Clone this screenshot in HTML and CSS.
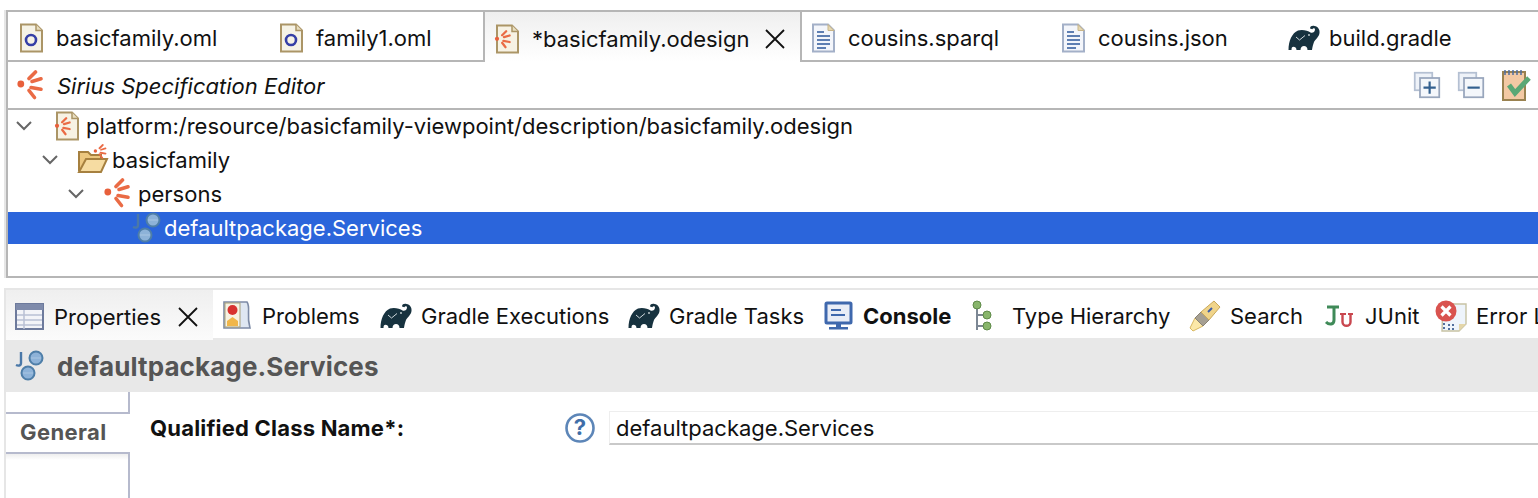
FILE: index.html
```html
<!DOCTYPE html>
<html lang="en">
<head>
<meta charset="utf-8">
<title>Sirius Specification Editor</title>
<link rel="stylesheet" href="styles.css">
</head>
<body>
<svg class="defs" width="0" height="0" aria-hidden="true">
  <defs>
    <symbol id="sirius" viewBox="0 0 32 32">
      <circle cx="4.800" cy="14" r="3.400" fill="#e8603c"/>
      <g stroke="#ea6b45" stroke-width="3.600" stroke-linecap="round" fill="none">
        <path d="M13 8.500 L19.500 2"/>
        <path d="M16 11.500 L25 8.800"/>
        <path d="M15 17.500 L25 19.200"/>
        <path d="M13 20.500 L18.500 27.500"/>
      </g>
    </symbol>
    <symbol id="omlfile" viewBox="0 0 32 32">
      <path d="M6 2.500 H21 L27 8.500 V29.500 H6 Z" fill="#f6f3e6" stroke="#ab9566" stroke-width="2"/>
      <path d="M21 2.500 V8.500 H27" fill="#e9dfc0" stroke="#ab9566" stroke-width="1.500"/>
      <circle cx="16" cy="18" r="5" fill="none" stroke="#3640a6" stroke-width="2.600"/>
    </symbol>
    <symbol id="odesign" viewBox="0 0 32 32">
      <path d="M6 2.500 H21 L27 8.500 V29.500 H6 Z" fill="#f7f2e4" stroke="#ab9566" stroke-width="2"/>
      <path d="M21 2.500 V8.500 H27" fill="#e9dfc0" stroke="#ab9566" stroke-width="1.500"/>
      <use href="#sirius" x="3" y="7" width="20" height="20"/>
    </symbol>
    <symbol id="textfile" viewBox="0 0 32 32">
      <path d="M6 2.500 H21 L27 8.500 V29.500 H6 Z" fill="#f4f6fb" stroke="#a3b0c8" stroke-width="2"/>
      <path d="M21 2.500 V8.500 H27 Z" fill="#e6d8b0" stroke="#c7b488" stroke-width="1"/>
      <path d="M10 10 H17 M10 14 H23 M10 18 H23 M10 22 H23 M10 26 H19" stroke="#5f7fb2" stroke-width="2"/>
    </symbol>
    <symbol id="gradle" viewBox="0 0 32 32">
      <path fill="#17323f" d="M0.500 28 C0.500 19 4 11 10 8.500 C14 7 20 8.500 22.500 10.500 C24.500 11.500 27 10 27 7.500 C27 6 25 5.600 24.400 7.200 L22 6.500 C22 4 24.500 3.500 26.500 4 C30 4.500 32 7.500 31.500 11 C31 15 27.500 17 26 20 C25 22.500 24.500 25 24 28 H19.500 C19.500 25.500 18 24 16 24 C14 24 12.500 25.500 12.500 28 H8.500 C8.500 26 7 24.800 5.500 24.800 C4 24.800 3.500 26 3.500 28 Z"/>
      <path d="M8 15 L11.500 18 L17 13.500" fill="none" stroke="#cfd8dc" stroke-width="1"/>
      <circle cx="21" cy="13" r="0.900" fill="#cfd8dc"/>
    </symbol>
    <symbol id="classes" viewBox="0 0 32 32">
      <path d="M6 2 V13 C6 16 3 16 1 15" fill="none" stroke="#4a78a8" stroke-width="2.400"/>
      <circle cx="21" cy="8" r="6.500" fill="#8db2d8" stroke="#4e7ea8" stroke-width="2"/>
      <path d="M16 8 H26" stroke="#a9c6e2" stroke-width="1"/>
      <circle cx="13" cy="23" r="6.500" fill="#8db2d8" stroke="#4e7ea8" stroke-width="2"/>
      <path d="M8 23 H18" stroke="#a9c6e2" stroke-width="1"/>
    </symbol>
  </defs>
</svg>

<main class="workbench">
  <section class="editor">
    <div class="tabs top-tabs">
      <div class="tab"><svg class="ico"><use href="#omlfile"/></svg><span>basicfamily.oml</span></div>
      <div class="tab"><svg class="ico"><use href="#omlfile"/></svg><span>family1.oml</span></div>
      <div class="tab active">
        <svg class="ico"><use href="#odesign"/></svg><span>*basicfamily.odesign</span>
        <svg class="close" viewBox="0 0 20 20"><path d="M1 1 L19 19 M19 1 L1 19"/></svg>
      </div>
      <div class="tab"><svg class="ico"><use href="#textfile"/></svg><span>cousins.sparql</span></div>
      <div class="tab"><svg class="ico"><use href="#textfile"/></svg><span>cousins.json</span></div>
      <div class="tab"><svg class="ico"><use href="#gradle"/></svg><span>build.gradle</span></div>
    </div>
    <header class="form-title">
      <div class="form-name"><svg class="ico"><use href="#sirius"/></svg><em>Sirius Specification Editor</em></div>
      <div class="tools">
        <svg class="tool" viewBox="0 0 32 32">
          <rect x="2" y="2" width="20" height="20" fill="#eef2f8" stroke="#b4c0d2" stroke-width="2"/>
          <rect x="8" y="8" width="22" height="22" fill="#f4f7fb" stroke="#98a6bc" stroke-width="2"/>
          <path d="M12 19 H26 M19 12 V26" stroke="#33608f" stroke-width="2.500"/>
        </svg>
        <svg class="tool" viewBox="0 0 32 32">
          <rect x="2" y="2" width="20" height="20" fill="#eef2f8" stroke="#b4c0d2" stroke-width="2"/>
          <rect x="8" y="8" width="22" height="22" fill="#f4f7fb" stroke="#98a6bc" stroke-width="2"/>
          <path d="M12 19 H26" stroke="#33608f" stroke-width="2.500"/>
        </svg>
        <svg class="tool notebook" viewBox="0 0 30 32">
          <rect x="2" y="3" width="22" height="28" fill="#f3c9a4" stroke="#9a8250" stroke-width="2"/>
          <path d="M4 1 V6 M8 1 V6 M12 1 V6 M16 1 V6 M20 1 V6" stroke="#4f6da0" stroke-width="1.500"/>
          <path d="M8 16 L14 24 L28 9" fill="none" stroke="#5aa875" stroke-width="5"/>
        </svg>
      </div>
    </header>
    <div class="tree">
      <div class="row depth-0">
        <svg class="twist" viewBox="0 0 16 10"><path d="M1 1 L8 8 L15 1"/></svg>
        <svg class="ico"><use href="#odesign"/></svg>
        <span>platform:/resource/basicfamily-viewpoint/description/basicfamily.odesign</span>
      </div>
      <div class="row depth-1">
        <svg class="twist" viewBox="0 0 16 10"><path d="M1 1 L8 8 L15 1"/></svg>
        <svg class="ico" viewBox="0 0 32 32">
          <path d="M2 27 V8 H11 L14 11 H24 V15" fill="#ecc77f" stroke="#a6803f" stroke-width="2"/>
          <path d="M2 28 L9 15 H30 L24 28 Z" fill="#f6dca2" stroke="#a6803f" stroke-width="2"/>
          <use href="#sirius" x="16" y="0" width="16" height="16"/>
        </svg>
        <span>basicfamily</span>
      </div>
      <div class="row depth-2">
        <svg class="twist" viewBox="0 0 16 10"><path d="M1 1 L8 8 L15 1"/></svg>
        <svg class="ico"><use href="#sirius"/></svg>
        <span>persons</span>
      </div>
      <div class="row depth-3 selected">
        <svg class="ico"><use href="#classes"/></svg>
        <span>defaultpackage.Services</span>
      </div>
    </div>
  </section>

  <section class="views">
    <div class="tabs bottom-tabs">
      <div class="tab active">
        <svg class="ico" viewBox="0 0 32 32">
          <rect x="3" y="3" width="27" height="25" fill="#f3f4f8" stroke="#6d7a9c" stroke-width="2"/>
          <rect x="3" y="3" width="27" height="6" fill="#7f8bab"/>
          <path d="M4 14 H29 M4 19 H29 M4 24 H29 M11 9 V28" stroke="#b9c0d4" stroke-width="1.500"/>
        </svg>
        <span>Properties</span>
        <svg class="close" viewBox="0 0 20 20"><path d="M1 1 L19 19 M19 1 L1 19"/></svg>
      </div>
      <div class="tab">
        <svg class="ico" viewBox="0 0 32 32">
          <path d="M3 2 H26 C30 8 25 14 29 28 H3 Z" fill="#dfe7f2" stroke="#7d8ba6" stroke-width="1.600"/>
          <rect x="4" y="3" width="15" height="24" fill="#f7f2e2" stroke="#a8a078" stroke-width="1"/>
          <circle cx="11.500" cy="10" r="5" fill="#d8322f"/>
          <path d="M6 26 V21 L11.500 17 L17 21 V26 Z" fill="#f0b64a"/>
        </svg>
        <span>Problems</span>
      </div>
      <div class="tab"><svg class="ico"><use href="#gradle"/></svg><span>Gradle Executions</span></div>
      <div class="tab"><svg class="ico"><use href="#gradle"/></svg><span>Gradle Tasks</span></div>
      <div class="tab">
        <svg class="ico" viewBox="0 0 32 32">
          <rect x="4" y="3" width="25" height="20" rx="1" fill="#e9edf6" stroke="#3f68ad" stroke-width="3"/>
          <path d="M9 10 H19 M9 15 H23" stroke="#3f68ad" stroke-width="2"/>
          <path d="M14 24 H19 V27 H14 Z M7 27 H26 V29.500 H7 Z" fill="#3f68ad"/>
        </svg>
        <strong>Console</strong>
      </div>
      <div class="tab">
        <svg class="ico" viewBox="0 0 32 32">
          <path d="M6 5 V30 M6 15 H14 M6 26 H14" stroke="#7c8794" stroke-width="2" fill="none"/>
          <circle cx="6" cy="5" r="4" fill="#88b56b" stroke="#5e8a48"/>
          <circle cx="16" cy="15" r="4" fill="#88b56b" stroke="#5e8a48"/>
          <circle cx="16" cy="26" r="4" fill="#88b56b" stroke="#5e8a48"/>
        </svg>
        <span>Type Hierarchy</span>
      </div>
      <div class="tab">
        <svg class="ico" viewBox="0 0 32 32">
          <path d="M1 28 L6 18 L14 26 L4 31 Z" fill="#fbe8a8" stroke="#d9b860" stroke-width="1"/>
          <path d="M6 18 L12 12 L20 20 L14 26 Z" fill="#a59f92" stroke="#8a8374"/>
          <path d="M12 12 L25 1 L31 7 L20 20 Z" fill="#f0d48a" stroke="#c9a85a"/>
          <path d="M19 12 L23 8" stroke="#3d5da8" stroke-width="2"/>
        </svg>
        <span>Search</span>
      </div>
      <div class="tab">
        <svg class="ico" viewBox="0 0 32 32">
          <path d="M3 7 H15 M10 7 V20 C10 25 5 25 2 22" fill="none" stroke="#3f8a58" stroke-width="3"/>
          <path d="M16 14 H22 M24 14 H29" fill="none" stroke="#c9474f" stroke-width="1.800"/>
          <path d="M18.500 14 V22 C18.500 27 26.500 27 26.500 22 V14" fill="none" stroke="#c9474f" stroke-width="2.400"/>
        </svg>
        <span>JUnit</span>
      </div>
      <div class="tab">
        <svg class="ico" viewBox="0 0 32 32">
          <path d="M8 4 H31 V24 L24 31 H7 Z" fill="#eef4fb" stroke="#c7c2a4" stroke-width="1.400"/>
          <path d="M24 31 V24 H31 Z" fill="#e4d6a9"/>
          <path d="M9 23 V29 M13 25 H20 M13 29 H20" stroke="#52709e" stroke-width="2" stroke-dasharray="2 2"/>
          <circle cx="11" cy="11" r="10.500" fill="#d9534f"/>
          <path d="M6.500 6.500 L15.500 15.500 M15.500 6.500 L6.500 15.500" stroke="#fff" stroke-width="3.200"/>
        </svg>
        <span>Error Log</span>
      </div>
    </div>
    <header class="prop-title">
      <svg class="ico"><use href="#classes"/></svg>
      <h1>defaultpackage.Services</h1>
    </header>
    <div class="prop-body">
      <nav class="prop-nav">
        <div class="nav-top"></div>
        <div class="nav-item">General</div>
        <div class="nav-rest"></div>
      </nav>
      <div class="prop-field">
        <label class="field-label" for="qcn">Qualified Class Name*:</label>
        <svg class="help" viewBox="0 0 32 32">
          <circle cx="16" cy="16" r="13.500" fill="#fff" stroke="#5d86b8" stroke-width="2.600"/>
          <text x="16" y="23" text-anchor="middle" class="help-mark">?</text>
        </svg>
        <div class="field-input" id="qcn">defaultpackage.Services</div>
      </div>
    </div>
  </section>
</main>
</body>
</html>
```

FILE: styles.css
```css
* { box-sizing: border-box; }

html, body {
  margin: 0;
  height: 498px;
  overflow: hidden;
  background: #fff;
}

body {
  font-family: Inter, "Noto Sans", "Liberation Sans", sans-serif;
  font-size: 22px;
  color: #111;
}

.defs { position: absolute; }

.workbench {
  width: 1538px;
  height: 498px;
  padding: 10px 0 0 4px;
  display: flex;
  flex-direction: column;
  overflow: hidden;
}

.ico {
  width: 32px;
  height: 32px;
  flex: none;
}

.tabs {
  display: grid;
  white-space: nowrap;
}

.tab {
  display: flex;
  align-items: center;
  gap: 9px;
  padding: 4px 0 0 7px;
  overflow: hidden;
}

.close {
  width: 20px;
  height: 20px;
  flex: none;
  margin-left: 8px;
  fill: none;
  stroke: #111;
  stroke-width: 1.800;
}

/* top editor */
.editor {
  height: 268px;
  flex: none;
  border-left: 2px solid #e6e6e6;
  display: flex;
  flex-direction: column;
}

.top-tabs {
  height: 52px;
  flex: none;
  border-top: 2px solid #b6b6b6;
  border-left: 2px solid #b6b6b6;
  grid-template-columns: 260px 215px 319px 248px 231px 1fr;
}

.top-tabs .tab {
  border-bottom: 2px solid #b6b6b6;
}

.top-tabs .tab.active {
  border-left: 2px solid #b6b6b6;
  border-right: 2px solid #b6b6b6;
  border-bottom: 0;
  padding-left: 6px;
  background: linear-gradient(#efefef, #fff);
}

.top-tabs .tab.active .close { margin-left: 7px; }

.top-tabs .tab:nth-child(4) { padding-left: 5px; }

.form-title {
  height: 48px;
  flex: none;
  padding-top: 1px;
  border-left: 2px solid #b6b6b6;
  border-bottom: 2px solid #b6b6b6;
  display: flex;
  justify-content: space-between;
  align-items: center;
}

.form-name {
  display: flex;
  align-items: center;
  gap: 9px;
  padding-left: 8px;
}

.tools {
  display: flex;
  align-items: center;
  gap: 16px;
  padding-right: 7px;
  margin-top: -2px;
}

.tool {
  width: 28px;
  height: 28px;
  flex: none;
}

.tool.notebook {
  width: 30px;
  height: 32px;
}

.tree {
  flex: 1;
  border-left: 2px solid #b6b6b6;
  border-bottom: 2px solid #b6b6b6;
}

.row {
  height: 34px;
  padding-bottom: 2px;
  display: flex;
  align-items: center;
}

.row .ico { margin-right: 3px; }

.twist {
  width: 16px;
  height: 10px;
  flex: none;
  margin-right: 19px;
  fill: none;
  stroke: #666;
  stroke-width: 2;
}

.depth-0 { padding-left: 8px; }
.depth-1 { padding-left: 34px; }
.depth-2 { padding-left: 60px; }
.depth-3 { padding-left: 124px; }

.row.selected {
  height: 32px;
  padding-bottom: 0;
  background: #2b65db;
  color: #fff;
}

.row.selected .ico { margin-right: 0; }

/* bottom views */
.views {
  margin-top: 10px;
  border-left: 2px solid #e6e6e6;
  flex: 1;
  display: flex;
  flex-direction: column;
}

.bottom-tabs {
  height: 50px;
  flex: none;
  border-top: 2px solid #e6e6e6;
  grid-template-columns: 207px 159px 248px 194px 149px 218px 135px 111px 1fr;
}

.bottom-tabs .tab:not(:first-child) { padding-left: 8px; }

.bottom-tabs .tab.active {
  position: relative;
  z-index: 1;
  margin-bottom: -2px;
  background: linear-gradient(#efefef, #fbfbfb);
}

.prop-title {
  height: 54px;
  flex: none;
  background: #e8e8e8;
  display: flex;
  align-items: center;
  gap: 10px;
  padding: 2px 0 0 9px;
}

.prop-title h1 {
  margin: 0;
  font-size: 26px;
  font-weight: 700;
  letter-spacing: 0.1px;
  color: #555;
}

.prop-body {
  flex: 1;
  display: flex;
}

.prop-nav {
  width: 124px;
  flex: none;
  display: flex;
  flex-direction: column;
}

.nav-top {
  height: 22px;
  flex: none;
  border-right: 2px solid #b6bacd;
  border-bottom: 2px solid #b6bacd;
}

.nav-item {
  height: 38px;
  flex: none;
  padding: 0 0 2px 14px;
  display: flex;
  align-items: center;
  font-weight: 700;
  letter-spacing: 0.4px;
  color: #555;
}

.nav-rest {
  flex: 1;
  border-top: 2px solid #b6bacd;
  border-right: 2px solid #b6bacd;
  background: linear-gradient(#eeeeee, #fff 6px);
}

.prop-field {
  flex: 1;
  display: flex;
  align-items: center;
  height: 34px;
  margin-top: 19px;
  padding-left: 20px;
}

.field-label {
  width: 414px;
  flex: none;
  font-weight: 700;
  letter-spacing: 0.2px;
}

.help {
  width: 32px;
  height: 32px;
  flex: none;
  margin-right: 13px;
}

.help-mark {
  font-size: 22px;
  font-weight: 700;
  fill: #3f6ea8;
}

.field-input {
  flex: 1;
  height: 34px;
  padding-left: 6px;
  display: flex;
  align-items: center;
  border-top: 1px solid #eee;
  border-left: 1px solid #eee;
  border-bottom: 2px solid #c9c9c9;
}
```
